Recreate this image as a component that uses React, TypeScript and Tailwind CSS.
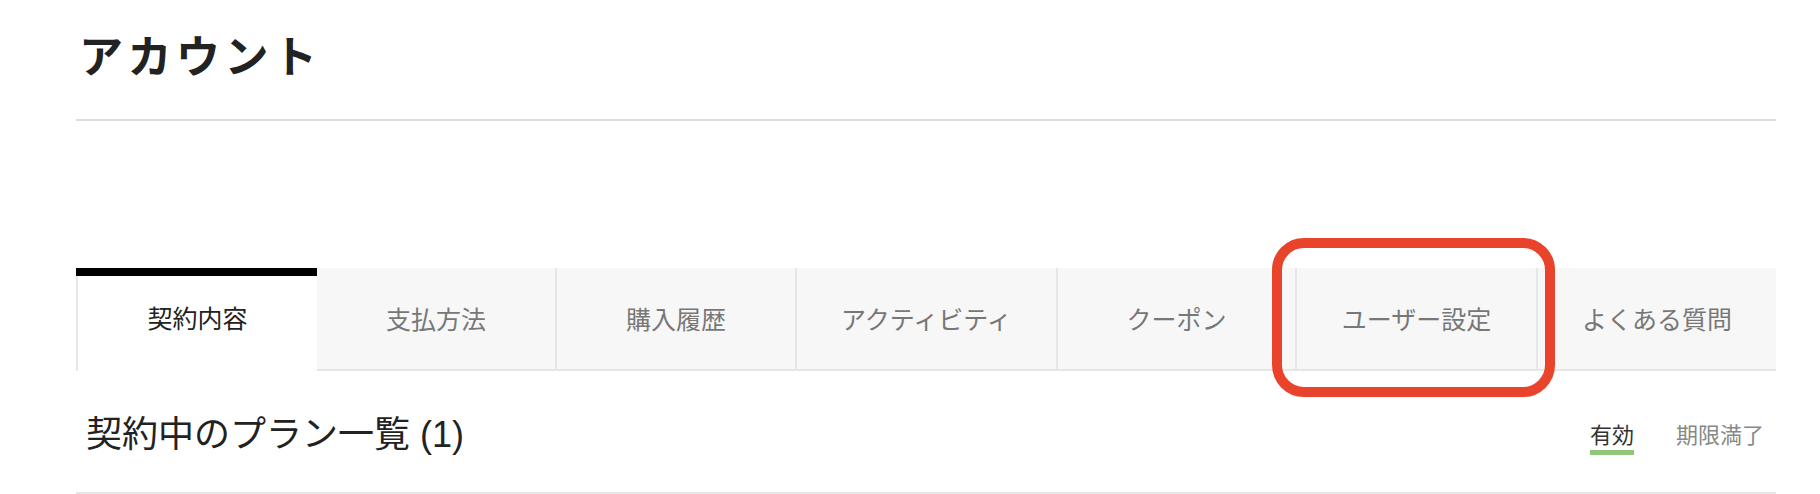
import React from 'react';

const tabs = [
  { label: '契約内容', width: 'w-[241px]' },
  { label: '支払方法', width: 'w-[238px]' },
  { label: '購入履歴', width: 'w-[240px]' },
  { label: 'アクティビティ', width: 'w-[261px]' },
  { label: 'クーポン', width: 'w-[239px]' },
  { label: 'ユーザー設定', width: 'w-[241px]' },
  { label: 'よくある質問', width: 'w-[240px]' },
];

const jp = { fontFamily: '"Noto Sans CJK JP", "Noto Sans", sans-serif' };
const mixed = { fontFamily: '"Liberation Sans", "Noto Sans CJK JP", sans-serif' };

export default function App() {
  return (
    <div className="relative h-[494px] w-full overflow-hidden bg-white" style={jp}>
      <div className="pl-[76px] pr-[44px]">
        <h1 className="ml-[3px] pt-[32px] text-[44px] font-bold leading-[44px] tracking-[4.5px] text-[#222]">
          アカウント
        </h1>
        <div className="mt-[43px] h-[2px] bg-[#dedede]" />

        {/* Tabs */}
        <div className="mt-[147px] flex h-[103px]">
          {tabs.map((tab, i) => {
            if (i === 0) {
              return (
                <div key={tab.label} className={`${tab.width} flex flex-col bg-white`}>
                  <div className="h-[8px] bg-black" />
                  <div className="flex flex-1 items-center justify-center border-l-2 border-[#e8e8e8] pb-[12px] text-[25px] text-[#222]">
                    {tab.label}
                  </div>
                </div>
              );
            }
            return (
              <div
                key={tab.label}
                className={`${tab.width} flex items-center justify-center border-b-2 border-[#e6e6e6] bg-[#f7f7f7] text-[25px] text-[#777] ${
                  i > 1 ? 'border-l-2' : ''
                }`}
              >
                {tab.label}
              </div>
            );
          })}
        </div>

        {/* Plan list header */}
        <div className="flex h-[123px] items-start justify-between border-b-2 border-[#e6e6e6]">
          <h2 className="ml-[10px] mt-[46px] text-[36px] leading-[36px] text-[#222]" style={mixed}>
            契約中のプラン一覧 (1)
          </h2>
          <div className="mr-[12px] mt-[51px] flex gap-[42px] text-[22px] leading-[22px]">
            <div className="flex flex-col">
              <span className="text-[#333]">有効</span>
              <div className="mt-[6px] h-[5px] bg-[#8fc87b]" />
            </div>
            <span className="text-[#888]">期限満了</span>
          </div>
        </div>
      </div>

      {/* Highlight annotation */}
      <div className="absolute left-[1272px] top-[238px] h-[159px] w-[283px] rounded-[32px] border-[10px] border-[#e9442b]" />
    </div>
  );
}
